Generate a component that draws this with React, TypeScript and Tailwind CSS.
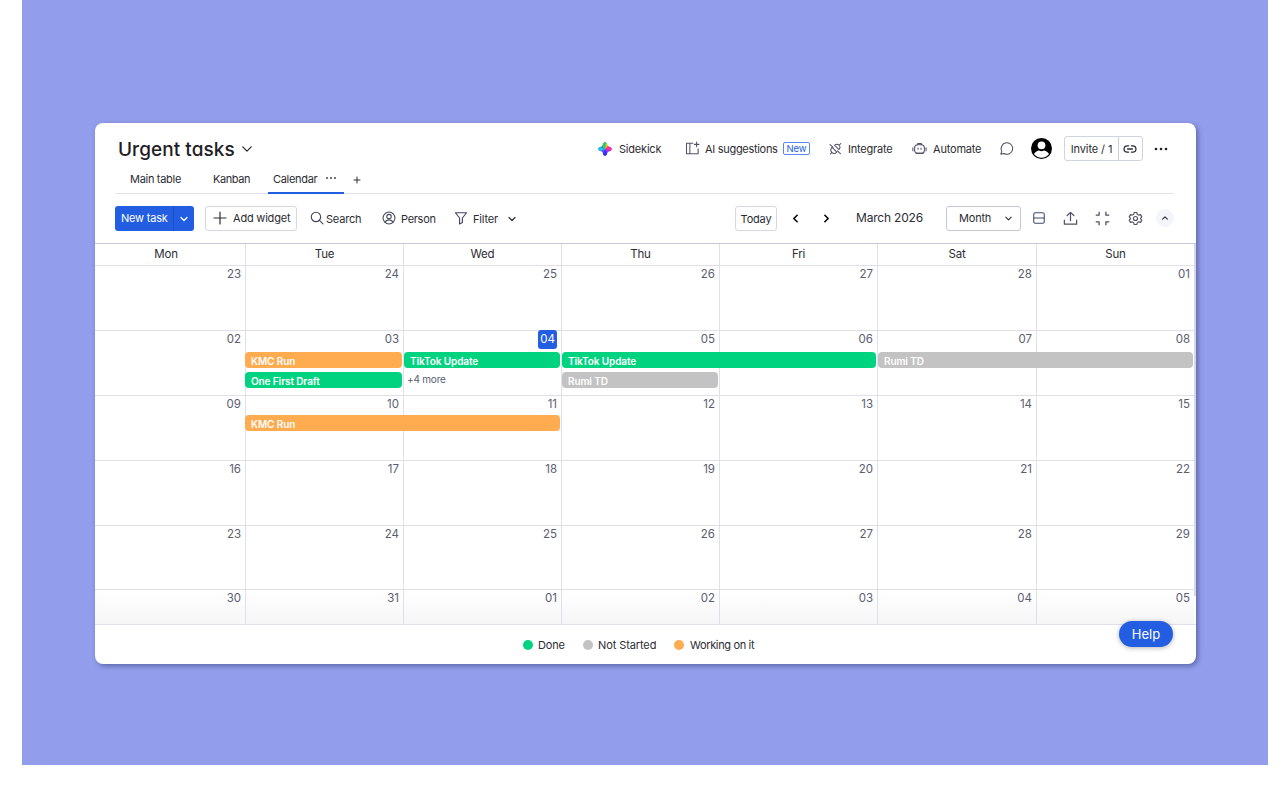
import type { ReactNode } from 'react';
import clsx from 'clsx';

type Status = 'done' | 'idle' | 'working';

type CalendarEvent = {
	label: string;
	status: Status;
	place: string;
};

type Week = {
	days: string[];
	height: string;
	eventsTop?: string;
	events?: CalendarEvent[];
	more?: string;
};

const COLUMNS = 'grid grid-cols-[150px_158px_158px_158px_158px_159px_158px]';

const STATUS_COLORS: Record<Status, string> = {
	done: 'bg-[#00d37f]',
	idle: 'bg-[#c3c3c3]',
	working: 'bg-[#ffab4f]',
};

const DAY_NAMES = ['Mon', 'Tue', 'Wed', 'Thu', 'Fri', 'Sat', 'Sun'];

const WEEKS: Week[] = [
	{ days: ['23', '24', '25', '26', '27', '28', '01'], height: 'h-[65px]' },
	{
		days: ['02', '03', '04', '05', '06', '07', '08'],
		height: 'h-[65px]',
		eventsTop: 'top-[21px]',
		events: [
			{ label: 'KMC Run', status: 'working', place: 'row-start-1 col-start-2 col-span-1' },
			{ label: 'TikTok Update', status: 'done', place: 'row-start-1 col-start-3 col-span-1 ml-px' },
			{ label: 'TikTok Update', status: 'done', place: 'row-start-1 col-start-4 col-span-2 ml-px' },
			{ label: 'Rumi TD', status: 'idle', place: 'row-start-1 col-start-6 col-span-2 ml-px' },
			{ label: 'One First Draft', status: 'done', place: 'row-start-2 col-start-2 col-span-1' },
			{ label: 'Rumi TD', status: 'idle', place: 'row-start-2 col-start-4 col-span-1 ml-px' },
		],
		more: '+4 more',
	},
	{
		days: ['09', '10', '11', '12', '13', '14', '15'],
		height: 'h-[65px]',
		eventsTop: 'top-[19px]',
		events: [{ label: 'KMC Run', status: 'working', place: 'row-start-1 col-start-2 col-span-2' }],
	},
	{ days: ['16', '17', '18', '19', '20', '21', '22'], height: 'h-[65px]' },
	{ days: ['23', '24', '25', '26', '27', '28', '29'], height: 'h-[64px]' },
	{
		days: ['30', '31', '01', '02', '03', '04', '05'],
		height: 'h-[35px] bg-linear-to-b from-white to-[#f6f6f7]',
	},
];

function Icon({
	className,
	stroke = 1.4,
	children,
}: {
	className?: string;
	stroke?: number;
	children: ReactNode;
}) {
	return (
		<svg
			viewBox="0 0 20 20"
			fill="none"
			stroke="currentColor"
			strokeWidth={stroke}
			strokeLinecap="round"
			strokeLinejoin="round"
			aria-hidden="true"
			className={clsx('shrink-0', className)}
		>
			{children}
		</svg>
	);
}

function SidekickIcon() {
	return (
		<svg viewBox="0 0 20 20" className="h-[14px] w-[14px] shrink-0" aria-hidden="true">
			<defs>
				<clipPath id="spark">
					<path d="M10 .5C12 .5 12.600 2 13.200 4 13.700 6 14 6.300 16 6.800 18 7.400 19.500 8 19.500 10S18 12.600 16 13.200C14 13.700 13.700 14 13.200 16 12.600 18 12 19.500 10 19.500S7.400 18 6.800 16C6.300 14 6 13.700 4 13.200 2 12.600 .5 12 .5 10S2 7.400 4 6.800C6 6.300 6.300 6 6.800 4 7.400 2 8 .5 10 .5Z" />
				</clipPath>
				<filter id="soft">
					<feGaussianBlur stdDeviation="0.8" />
				</filter>
			</defs>
			<g clipPath="url(#spark)">
				<rect width="20" height="20" fill="#6a4bf0" />
				<g filter="url(#soft)">
					<path d="M10 12 0-2h13Z" fill="#1fd655" />
					<path d="M10 11 12-2l6 8Z" fill="#ffb928" />
					<path d="M10 10 16 4l6 4-1 6Z" fill="#ff2d9a" />
					<path d="m10 10 11 4-7 7Z" fill="#a32df5" />
					<path d="M10 10 5 22h10Z" fill="#2f35f5" />
					<path d="M10 10-1 5v10Z" fill="#12c5f0" />
				</g>
			</g>
		</svg>
	);
}

function Chevron({ className, stroke = 2, d = 'm4 7 6 6 6-6' }: { className: string; stroke?: number; d?: string }) {
	return (
		<Icon className={className} stroke={stroke}>
			<path d={d} />
		</Icon>
	);
}

function Header() {
	return (
		<div className="flex h-[51px] items-center pl-[23px]">
			<h1 className="w-[122px] pt-[2px] text-[19px] font-medium tracking-[0.05px] text-[#1f2024] [font-feature-settings:'cv11']">
				Urgent tasks
			</h1>
			<Chevron className="h-[14px] w-[14px]" stroke={1.8} />

			<div className="ml-[344px] flex items-center">
				<SidekickIcon />
				<span className="ml-[7px] w-[66px]">Sidekick</span>
				<Icon className="h-[15px] w-[15px] text-[#4f5166]">
					<path d="M10.500 3H2v14h15.500v-6.500M6.500 3v14M15.500 1.500v6M12.500 4.500h6" />
				</Icon>
				<span className="ml-[5px] w-[78px] tracking-[-0.3px]">AI suggestions</span>
				<span className="flex h-[13px] w-[27px] items-center justify-center rounded-[2px] border border-[#5c86ea] text-[9.500px] tracking-[-0.1px] text-[#235ee2]">
					New
				</span>
				<Icon className="ml-[19px] h-[13px] w-[13px] text-[#4f5166]" stroke={1.6}>
					<path d="M4.500 8 12 15.500C9.500 18 6.500 18 4.500 16S2.500 10.500 4.500 8ZM8.500 5 15 11.500C17.500 9.500 17.500 7 15.500 5S11 2.500 8.500 5ZM4.500 16 2 18.500M15.500 5 18 2.500M1.500 4 6 8M13 13.500l4.500 4.500" />
				</Icon>
				<span className="ml-[6px] w-[64px]">Integrate</span>
				<Icon className="h-[15px] w-[15px] text-[#4f5166]">
					<rect x="3.500" y="5" width="13" height="11.500" rx="4" />
					<path d="M7.500 5V3.500h5V5M1.200 9v4M18.800 9v4M8 9.500V11M12 9.500V11M5.500 16.500h9" />
				</Icon>
				<span className="ml-[6px] w-[66px]">Automate</span>
				<Icon className="h-[15px] w-[15px] text-[#4f5166]">
					<path d="M2.500 17.500 3.700 13.600A7.700 7.700 0 1 1 6.700 16.700Z" />
				</Icon>
				<svg viewBox="0 0 20 20" className="ml-[17px] h-[21px] w-[21px]" aria-hidden="true">
					<circle cx="10" cy="10" r="10" fill="#000" />
					<circle cx="10" cy="7" r="3.700" fill="#fff" />
					<path d="M2.800 15.200C4.200 12.800 6.200 12 7.700 11.800c1.300 1 3.300 1 4.600 0 1.500.2 3.500 1 4.900 3.400A8.900 8.900 0 0 1 2.800 15.200Z" fill="#fff" />
				</svg>
				<div className="ml-[12px] flex h-[25px] w-[79px] items-center rounded-[3px] border border-[#d0d3e2]">
					<span className="flex h-full w-[54px] items-center justify-center border-r border-[#c9ccdc] tracking-[-0.1px]">Invite / 1</span>
					<Icon className="ml-[4px] h-[14px] w-[14px]" stroke={1.8}>
						<path d="M8 5.500H6a4.500 4.500 0 0 0 0 9h2M12 5.500h2a4.500 4.500 0 0 1 0 9h-2M6.500 10h7" />
					</Icon>
				</div>
				<svg viewBox="0 0 14 4" className="ml-[11px] h-[4px] w-[14px]" fill="#1f2024" aria-hidden="true">
					<circle cx="2" cy="2" r="1.300" />
					<circle cx="7" cy="2" r="1.300" />
					<circle cx="12" cy="2" r="1.300" />
				</svg>
			</div>
		</div>
	);
}

function Tabs() {
	return (
		<div className="mr-[22px] ml-[21px] flex h-[20px] border-b border-[#e0e1ee] leading-[10px]">
			<span className="w-[83px] pl-[14px] tracking-[-0.3px]">Main table</span>
			<span className="w-[69px] pl-[14px] tracking-[-0.4px]">Kanban</span>
			<div className="-mb-px flex w-[76px] border-b-2 border-[#235ee2] pl-[5px]">
				<span className="w-[52px] tracking-[-0.3px]">Calendar</span>
				<svg viewBox="0 0 12 4" className="mt-[2px] h-[4px] w-[12px]" fill="#44465a" aria-hidden="true">
					<circle cx="2" cy="2" r="1" />
					<circle cx="6" cy="2" r="1" />
					<circle cx="10" cy="2" r="1" />
				</svg>
			</div>
			<Icon className="mt-px ml-[8px] h-[10px] w-[10px]" stroke={2}>
				<path d="M10 4v12M4 10h12" />
			</Icon>
		</div>
	);
}

function Toolbar() {
	return (
		<div className="flex h-[49px] items-center pl-[20px]">
			<button type="button" className="flex h-[25px] w-[79px] items-center rounded-[3px] bg-[#235ee2] pb-px text-white">
				<span className="w-[58px] pl-[6px] text-left">New task</span>
				<span className="-mb-px flex h-[25px] w-[21px] items-center justify-center border-l border-[#1c4fc4]">
					<Chevron className="h-[10px] w-[10px]" stroke={2.6} />
				</span>
			</button>
			<button type="button" className="ml-[11px] flex h-[25px] w-[92px] items-center rounded-[3px] border border-[#d5d7e5] pb-px pl-[7px]">
				<Icon className="h-[14px] w-[14px]" stroke={1.7}>
					<path d="M10 1.500v17M1.500 10h17" />
				</Icon>
				<span className="ml-[6px]">Add widget</span>
			</button>
			<Icon className="mb-[2px] ml-[13px] h-[14px] w-[14px] text-[#44465f]" stroke={1.6}>
				<circle cx="8.500" cy="8.500" r="6.700" />
				<path d="m13.500 13.500 5 5" />
			</Icon>
			<span className="ml-[2px] w-[56px]">Search</span>
			<Icon className="mb-px h-[14px] w-[14px] text-[#44465f]" stroke={1.5}>
				<circle cx="10" cy="10" r="8.500" />
				<circle cx="10" cy="8" r="3.200" />
				<path d="M4.500 16c1-2.500 3-3.300 5.500-3.300s4.500.8 5.500 3.300" />
			</Icon>
			<span className="ml-[5px] w-[53px] tracking-[-0.3px]">Person</span>
			<Icon className="mb-px h-[14px] w-[14px] text-[#44465f]" stroke={1.6}>
				<path d="M2 2.500h16L12 10v6.500L8 18.500V10Z" />
			</Icon>
			<span className="ml-[5px] w-[34px]">Filter</span>
			<Chevron className="h-[10px] w-[10px]" stroke={2.4} />

			<button type="button" className="ml-[218px] flex h-[25px] w-[42px] items-center justify-center rounded-[3px] border border-[#d5d7e5]">
				Today
			</button>
			<Chevron className="mb-px ml-[13px] h-[11px] w-[11px] text-black" stroke={2.800} d="m13 4-6 6 6 6" />
			<Chevron className="mb-px ml-[20px] h-[11px] w-[11px] text-black" stroke={2.800} d="m7 4 6 6-6 6" />
			<span className="mb-px ml-[24px] w-[90px] text-[12px]">March 2026</span>
			<button type="button" className="flex h-[25px] w-[75px] items-center rounded-[3px] border border-[#c5c7d8] pb-px pl-[12px]">
				<span className="w-[45px] text-left">Month</span>
				<Chevron className="h-[9px] w-[9px]" stroke={2.4} />
			</button>
			<Icon className="mb-px ml-[11px] h-[14px] w-[14px] text-[#3d4a70]" stroke={1.5}>
				<rect x="2.500" y="2.500" width="15" height="15" rx="2" />
				<path d="M2.500 10h15" />
			</Icon>
			<Icon className="mb-px ml-[17px] h-[15px] w-[15px] text-[#4f5166]" stroke={1.6}>
				<path d="M10 13V2M5.500 6 10 1.800 14.500 6M1.800 12v5.500h16.400V12" />
			</Icon>
			<Icon className="mb-px ml-[17px] h-[15px] w-[15px] text-[#4f5166]" stroke={1.7}>
				<path d="M5.500 1v4.500H1M14.500 1v4.500H19M5.500 19v-4.500H1M14.500 19v-4.500H19" strokeLinecap="butt" />
			</Icon>
			<Icon className="mb-px ml-[18px] h-[15px] w-[15px] text-[#4f5166]" stroke={1.5}>
				<path d="M8.300 2h3.400l.7 2.500 1.800 1 2.500-.7 1.700 3L16.600 9.700v.6l1.800 1.900-1.700 3-2.500-.7-1.800 1-.7 2.500H8.300l-.7-2.500-1.800-1-2.500.7-1.700-3 1.800-1.900v-.6L1.600 7.800l1.700-3 2.500.7 1.800-1Z" />
				<circle cx="10" cy="10" r="2.700" />
			</Icon>
			<span className="mb-px ml-[13px] flex h-[18px] w-[18px] items-center justify-center rounded-full bg-[#f4f5fa]">
				<Chevron className="h-[8px] w-[8px]" stroke={2.600} d="m4 13 6-6 6 6" />
			</span>
		</div>
	);
}

function WeekRow({ week, current }: { week: Week; current: boolean }) {
	return (
		<div className={clsx(COLUMNS, 'relative border-t border-[#dfe0ec]', week.height)}>
			{week.days.map((day, i) => (
				<div
					key={i}
					className={clsx(
						'flex justify-end pr-[4px] text-[11.500px] tracking-normal text-[#5b5d70]',
						i > 0 && 'border-l border-[#dfe0ec]',
					)}
				>
					{current && day === '04' ? (
						<span className="-mt-px flex h-[19px] w-[19px] items-center justify-center rounded-[3px] bg-[#235ee2] pb-px text-white">
							{day}
						</span>
					) : (
						<span className="pt-px leading-[14px]">{day}</span>
					)}
				</div>
			))}
			{week.events && (
				<div
					className={clsx(
						COLUMNS,
						'absolute left-0 auto-rows-[16px] gap-y-[4px] text-[10px] font-semibold tracking-[-0.1px] text-white',
						week.eventsTop,
					)}
				>
					{week.events.map((event) => (
						<div
							key={event.place}
							className={clsx('mr-px flex items-center rounded-[4px] pt-px pl-[6px]', STATUS_COLORS[event.status], event.place)}
						>
							{event.label}
						</div>
					))}
					{week.more && (
						<span className="col-start-3 row-start-2 pl-[4px] leading-[15px] font-normal tracking-[-0.2px] text-[#5b5d70]">
							{week.more}
						</span>
					)}
				</div>
			)}
		</div>
	);
}

function Legend() {
	return (
		<div className="flex h-[40px] items-center border-t border-[#dfe0ec] pl-[428px]">
			<span className="h-[10px] w-[10px] rounded-full bg-[#00d37f]" />
			<span className="ml-[5px] w-[45px]">Done</span>
			<span className="h-[10px] w-[10px] rounded-full bg-[#c3c3c3]" />
			<span className="ml-[5px] w-[76px] tracking-[-0.1px]">Not Started</span>
			<span className="h-[10px] w-[10px] rounded-full bg-[#ffab4f]" />
			<span className="ml-[6px] tracking-[-0.35px]">Working on it</span>
		</div>
	);
}

export default function App() {
	return (
		<div className="h-[788px] w-[1288px] overflow-hidden bg-white pl-[22px] text-[11px] leading-[14px] tracking-[-0.2px] whitespace-nowrap text-[#2c2d33] [font-family:Inter,sans-serif]">
			<div className="h-[765px] w-[1246px] bg-[#929eeb] pt-[123px] pl-[73px]">
				<div className="relative h-[541px] w-[1101px] rounded-[8px] bg-white shadow-[2px_2px_5px_rgba(60,65,120,0.6)]">
					<Header />
					<Tabs />
					<Toolbar />

					{/* Month grid */}
					<div className="flex border-t border-[#c5c7da]">
						<div className="w-[1099px]">
							<div className={clsx(COLUMNS, 'h-[21px] text-[11.500px]')}>
								{DAY_NAMES.map((name, i) => (
									<div
										key={name}
										className={clsx('flex items-center justify-center pb-px', i > 0 ? 'border-l border-[#dfe0ec]' : 'pr-[8px]')}
									>
										{name}
									</div>
								))}
							</div>
							{WEEKS.map((week, i) => (
								<WeekRow key={i} week={week} current={i === 1} />
							))}
						</div>
						<div className="h-[352px] w-[2px] bg-[#d6d8e2]" />
					</div>

					<Legend />

					<button
						type="button"
						className="absolute right-[23px] bottom-[17px] flex h-[26px] w-[54px] items-center justify-center rounded-full bg-[#235ee2] text-[13px] tracking-normal text-white shadow-[0_1px_5px_rgba(0,0,0,0.3)]"
					>
						Help
					</button>
				</div>
			</div>
		</div>
	);
}
